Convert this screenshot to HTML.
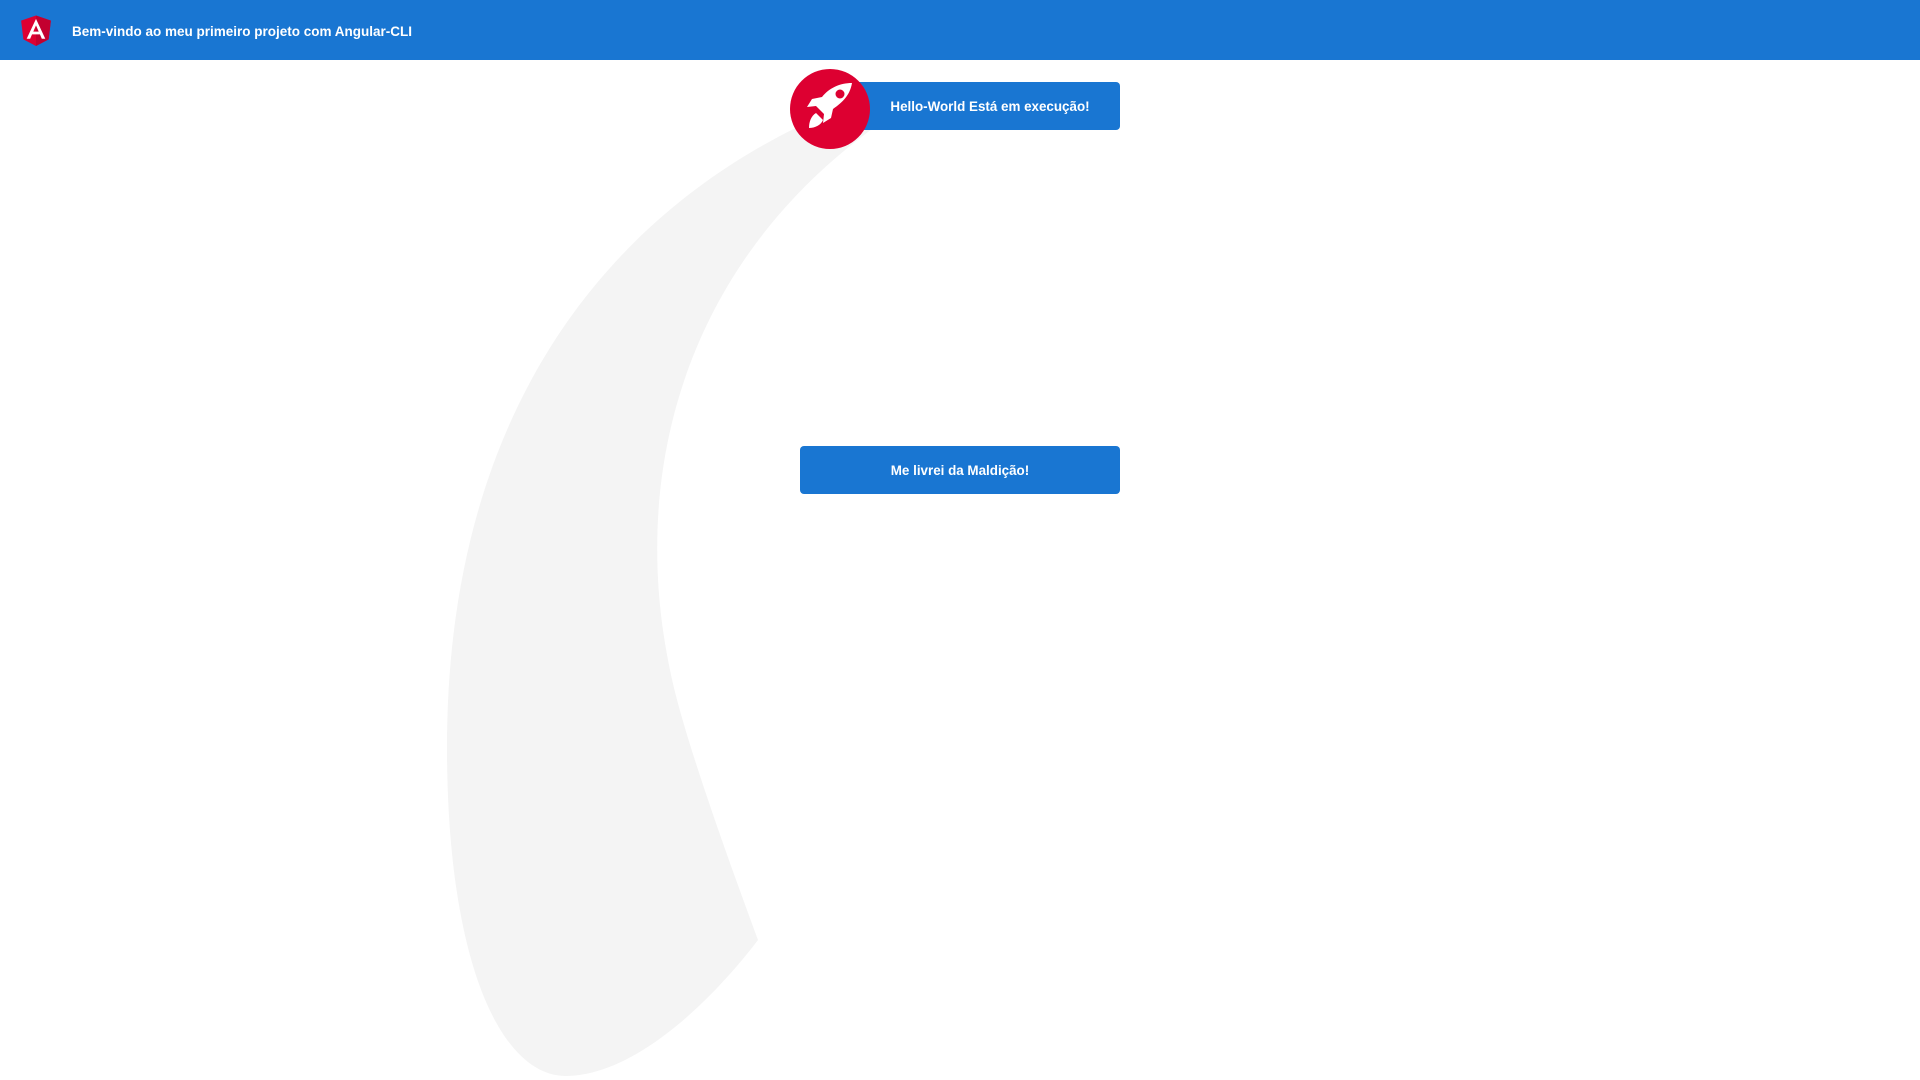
<!DOCTYPE html>
<html><head><meta charset="utf-8"><style>
body{margin:0;width:1920px;height:1080px;overflow:hidden;background:#fff;font-family:"Segoe UI","Liberation Sans",sans-serif;position:relative}
.top{position:absolute;left:0;top:0;width:1920px;height:60px;background:#1976d2;color:#fff}
.top span{position:absolute;left:72px;top:24px;font-size:13.5px;font-weight:600}
.btn{position:absolute;left:800px;width:320px;height:48px;background:#1976d2;border-radius:4px;color:#fff;font-size:13.4px;font-weight:600;display:flex;align-items:center;justify-content:center;padding-top:1px;box-sizing:border-box}
</style></head><body>
<svg width="1920" height="1080" style="position:absolute;left:0;top:0">
<path d="M808,122 C600,220 447,420 447,747 C447,960 500,1075 565,1076 C640,1076 720,990 758,940 C710,810 680,720 670,670 C630,480 680,270 872,129 Z" fill="#f4f4f4"/>
</svg>
<div class="top">
<svg width="40" height="38" viewBox="0 0 250 250" preserveAspectRatio="none" style="position:absolute;left:16px;top:11px">
<polygon fill="#dd0031" points="125,30 125,30 125,30 31.9,63.2 46.1,186.3 125,230 203.9,186.3 218.1,63.2"/>
<polygon fill="#c3002f" points="125,30 125,52.2 125,52.1 125,153.4 125,230 203.9,186.3 218.1,63.2"/>
<path fill="#fff" d="M125,52.1L66.8,182.6h21.7l11.7-29.2h49.4l11.7,29.2H183L125,52.1z M142,135.4H108l17-40.9L142,135.4z"/>
</svg>
<span>Bem-vindo ao meu primeiro projeto com Angular-CLI</span>
</div>
<div class="btn" style="top:82px;padding-left:60px">Hello-World Está em execução!</div>
<div class="btn" style="top:446px">Me livrei da Maldição!</div>
<svg width="80" height="80" viewBox="0 0 80 80" style="position:absolute;left:790px;top:69px">
<circle cx="40" cy="40" r="40" fill="#dd0031"/>
<g fill="#fff">
<path d="M62,14 C50,14 39,19 32,28 L22,30 L17,38 L26,37 L34,45 L33,54 L41,49 L43,40 C53,33 60,26 62,14 Z"/>
<circle cx="50" cy="25" r="4.5" fill="#dd0031"/>
<path d="M26,44 C21,47 19,53 19,59 C25,59 31,56 33,51 Z"/>
</g>
</svg>
</body></html>
